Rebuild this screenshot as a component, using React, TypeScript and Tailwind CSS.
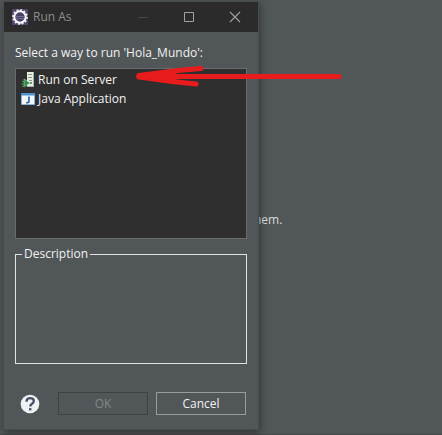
import { useState } from "react";

function EclipseIcon() {
  return (
    <svg viewBox="0 0 16 16" className="h-4 w-4">
      <rect width="16" height="16" fill="#51456f" />
      <circle cx="8" cy="8" r="7" fill="none" stroke="#e4e4e4" strokeWidth="1.8" strokeDasharray="1.9 1.76" />
      <circle cx="8" cy="8" r="5.7" fill="#4a4268" stroke="#fafafa" strokeWidth="2" />
      <path d="M4 7.5h8M4 9.5h8" stroke="#716b8c" strokeWidth="1" />
    </svg>
  );
}

function ServerIcon() {
  return (
    <svg viewBox="0 0 16 16" className="h-4 w-4">
      <path d="M7 0h7v15H7z" fill="#a3b4a8" />
      <path d="M7 0h6v14H7z" fill="#e9eee0" />
      <path d="M8 2.5h4M8 5.5h4M9 8.5h3" stroke="#83998a" />
      <path d="M10 10h2v2h-2z" fill="#5f9b6b" />
      <path d="M4 7l6 4-6 4z" fill="#2b8f46" stroke="#a9d6b3" strokeWidth=".6" />
      <path d="M2 9.5h2M1 12h3M2 14.5h3" stroke="#3f9a57" />
    </svg>
  );
}

function JavaAppIcon() {
  return (
    <svg viewBox="0 0 16 16" className="h-4 w-4">
      <path d="M1.5 2.5h13v11h-13z" fill="#f1f7fa" stroke="#8bb4d4" />
      <path d="M1 2h14v2.5H1z" fill="#4f92ce" />
      <path d="M9 5.5v4.7q0 1.6-1.7 1.6H6.2" fill="none" stroke="#285f93" strokeWidth="1.6" />
    </svg>
  );
}

function HelpIcon() {
  return (
    <svg viewBox="0 0 20 20" className="h-5 w-5">
      <circle cx="10" cy="10" r="9.3" fill="#f0f2f5" />
      <path
        d="M6.5 7.8C6.5 5.4 8 4.2 10.1 4.2c2.2 0 3.7 1.2 3.7 3 0 2.6-3.6 2.6-3.6 5.4"
        fill="none"
        stroke="#485069"
        strokeWidth="2.3"
      />
      <path d="M9 14.1h2.4v2.3H9z" fill="#485069" />
    </svg>
  );
}

function Arrow() {
  return (
    <svg
      viewBox="0 0 210 24"
      className="pointer-events-none absolute left-[134px] top-[64px] h-[24px] w-[210px]"
      fill="none"
      stroke="#e81c1c"
      strokeWidth="5"
      strokeLinecap="round"
      strokeLinejoin="round"
    >
      <path d="M5 12.5H205" />
      <path d="M67 4.5 44 6.5 5 11.5" />
      <path d="M5 13 38 17.5 62 20" />
      <path d="M5 12.5 40 9v6z" fill="#e81c1c" />
    </svg>
  );
}

const launchers = [
  { label: "Run on Server", icon: <ServerIcon /> },
  { label: "Java Application", icon: <JavaAppIcon /> },
];

function TitleBar() {
  return (
    <header className="flex h-[30px] items-center bg-[#2b2b2b] pl-2">
      <EclipseIcon />
      <h1 className="ml-[5px] flex-1 text-[#8b8b8b]">Run As</h1>
      <button aria-label="Minimize" disabled className="flex w-[46px] justify-center">
        <svg viewBox="0 0 12 12" className="h-3 w-3" stroke="#484848">
          <path d="M1 6.5h10" />
        </svg>
      </button>
      <button aria-label="Maximize" className="flex w-[46px] justify-center">
        <svg viewBox="0 0 12 12" className="h-3 w-3" fill="none" stroke="#a0a0a0">
          <path d="M1.5 1.5h9v9h-9z" />
        </svg>
      </button>
      <button aria-label="Close" className="flex w-[46px] justify-center">
        <svg viewBox="0 0 12 12" className="h-3 w-3" stroke="#a0a0a0" strokeWidth="1.1">
          <path d="M1 1l10 10M11 1L1 11" />
        </svg>
      </button>
    </header>
  );
}

function RunAsDialog() {
  const [selected, setSelected] = useState("");

  return (
    <section
      role="dialog"
      aria-label="Run As"
      className="absolute left-[3px] top-px w-64 border border-[#484c4e] bg-[#515658] shadow-[1px_3px_8px_rgba(0,0,0,0.4)]"
    >
      <TitleBar />
      <div className="px-[11px] pb-[14px] pt-[13px]">
        <p className="leading-4">Select a way to run 'Hola_Mundo':</p>
        <ul className="mt-[7px] h-[171px] border border-[#686c6d] bg-[#2f2f2f] px-1 pt-px">
          {launchers.map((item) => (
            <li key={item.label}>
              <button
                onClick={() => setSelected(item.label)}
                aria-pressed={selected === item.label}
                className="flex h-[19px] w-full items-center gap-[2px] text-left"
              >
                {item.icon}
                <span>{item.label}</span>
              </button>
            </li>
          ))}
        </ul>
        <fieldset className="mt-[7px] h-[118px] border border-[#dfe3e4] px-1">
          <legend className="ml-[2px] px-[2px] leading-4">Description</legend>
        </fieldset>
        <div className="mt-7 flex items-center gap-2 pr-px">
          <button aria-label="Help" className="ml-[5px] mr-[10px]">
            <HelpIcon />
          </button>
          <button disabled className="h-[23px] flex-1 border border-[#3e4244] text-[#858889]">
            OK
          </button>
          <button className="h-[23px] flex-1 border border-[#979c9c]">Cancel</button>
        </div>
      </div>
    </section>
  );
}

export default function App() {
  return (
    <main className="relative min-h-screen border-b border-[#454a4c] bg-[#515658] pt-[212px] font-['Open_Sans',sans-serif] text-[12px] leading-4 text-[#f2f2f2]">
      <p className="pl-[254px] text-[#dadddd]">hem.</p>
      <RunAsDialog />
      <Arrow />
    </main>
  );
}
